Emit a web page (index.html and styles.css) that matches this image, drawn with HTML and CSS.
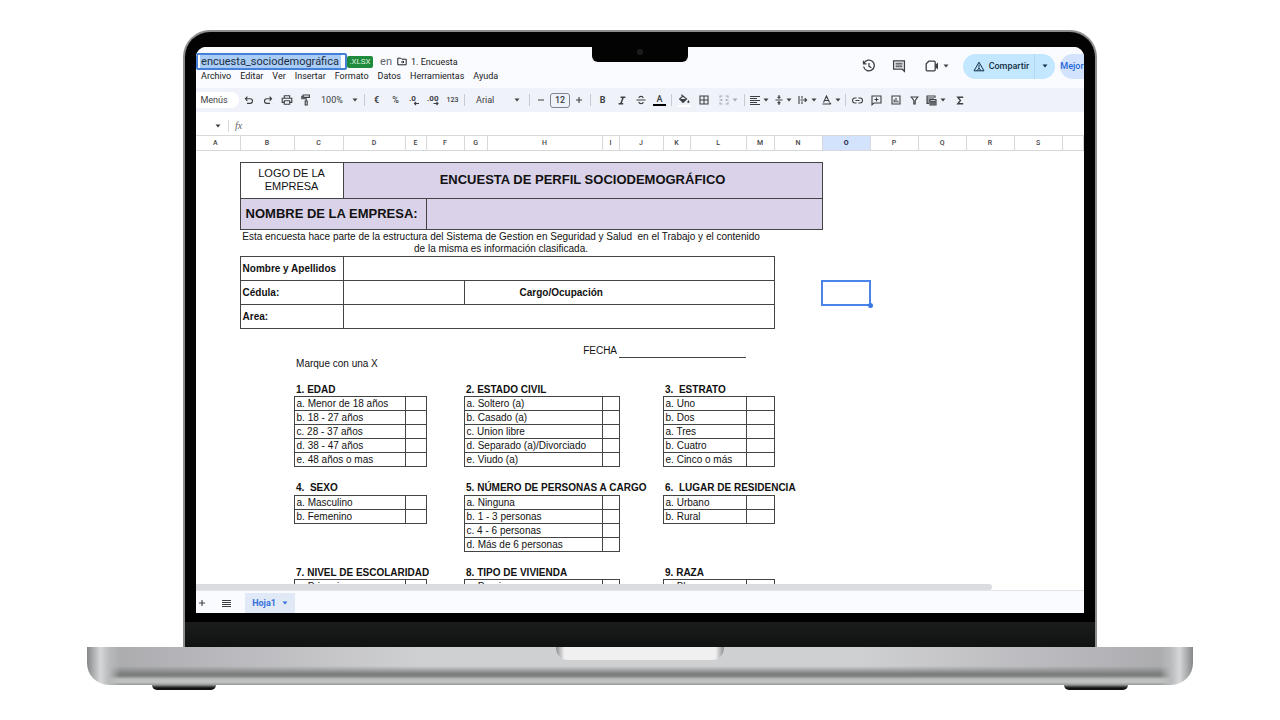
FILE: index.html
```html
<!DOCTYPE html>
<html lang="es">
<head>
<meta charset="utf-8">
<title>encuesta_sociodemográfica</title>
<link rel="stylesheet" href="styles.css">
</head>
<body>
<svg class="defs" aria-hidden="true">
  <symbol id="caret" viewBox="0 0 6 4"><path d="M.5.5h5L3 3.5z" fill="currentColor"/></symbol>
</svg>
<main class="laptop">
  <div class="lid">
    <div class="notch"><span class="camera"></span></div>
    <div class="screen">
      <header class="topbar">
        <div class="doc">
          <div class="title-row">
            <input class="doc-title" aria-label="Nombre del documento" value="encuesta_sociodemográfica">
            <span class="badge">.XLSX</span>
            <span class="in">en</span>
            <a class="folder" href="#">
              <svg width="10" height="9" viewBox="0 0 10 9" fill="none" stroke="currentColor"><path d="M.8 1.2h3l1 1h4.4v5.6H.8zM4 5h3M5.8 3.8 7 5 5.8 6.2"/></svg>
              1. Encuesta</a>
          </div>
          <nav class="menu">
            <button>Archivo</button><button>Editar</button><button>Ver</button><button>Insertar</button><button>Formato</button><button>Datos</button><button>Herramientas</button><button>Ayuda</button>
          </nav>
        </div>
        <div class="actions">
          <button class="act" aria-label="Historial"><svg width="14" height="14" viewBox="0 0 14 14" fill="none" stroke="currentColor" stroke-width="1.3"><path d="M2 4.2A5.4 5.4 0 1 1 1.6 7.5M1.5 1.8v3h3M7 4v3.3l2.4 1.5"/></svg></button>
          <button class="act" aria-label="Comentarios"><svg width="14" height="14" viewBox="0 0 14 14"><path d="M1.6 1.8h10.8v10.4l-2.2-2H1.6z" fill="none" stroke="currentColor" stroke-width="1.3"/><path d="M3.5 4.2h7M3.5 6h7M3.5 7.8h7" stroke="currentColor" stroke-width="1.1"/></svg></button>
          <button class="act meet" aria-label="Videollamada"><svg width="14" height="12" viewBox="0 0 14 12"><path d="M3.8 1.2h5.4q1 0 1 1v7.6q0 1-1 1H2.2q-1 0-1-1V3.8z" fill="none" stroke="currentColor" stroke-width="1.3"/><path d="M10 5l3-2.6v7.2L10 7z" fill="currentColor"/></svg><svg class="caret"><use href="#caret"/></svg></button>
          <div class="share">
            <button class="share-main"><svg width="12" height="11" viewBox="0 0 12 11" fill="none" stroke="currentColor"><path d="M6 1.2 11 9.8H1zM6 3.600v3.200M4.200 9.500 6 7l1.800 2.500"/></svg>Compartir</button>
            <button class="share-more" aria-label="Más opciones"><svg class="caret"><use href="#caret"/></svg></button>
          </div>
          <button class="upgrade">Mejor</button>
        </div>
      </header>

      <div class="toolbar">
        <button class="menus">Menús</button>
        <button aria-label="Deshacer"><svg width="10" height="10" viewBox="0 0 10 10" class="ln"><path d="M3.4 1.6 1.4 3.8l2 2.1M1.6 3.8h4.6a2.2 2.2 0 0 1 0 4.6H3"/></svg></button>
        <button aria-label="Rehacer"><svg width="10" height="10" viewBox="0 0 10 10" class="ln"><path d="M6.6 1.6l2 2.2-2 2.1M8.4 3.8H3.8a2.2 2.2 0 0 0 0 4.6H7"/></svg></button>
        <button aria-label="Imprimir"><svg width="12" height="10" viewBox="0 0 12 10" class="ln"><path d="M3.3 3V.8h5.4V3M3 7.4H1.2V3.2h9.6v4.2H9M3.3 5.8h5.4v3.4H3.3z"/></svg></button>
        <button aria-label="Copiar formato"><svg width="10" height="12" viewBox="0 0 10 12" class="ln"><path d="M2.2 1h6.2v2.4H2.2zM2.2 2.2H.8v2.6h4.4v2M4.2 7h2v4h-2z"/></svg></button>
        <button class="zoom">100%<svg class="caret"><use href="#caret"/></svg></button>
        <span class="sep"></span>
        <button class="bold">€</button>
        <button>%</button>
        <button aria-label="Reducir decimales"><svg width="13" height="12" viewBox="0 0 13 12"><text x="1" y="7" class="dec">.0</text><path class="ln" d="M11 9.5H6.5M8 8 6.5 9.5 8 11"/></svg></button>
        <button aria-label="Aumentar decimales"><svg width="13" height="12" viewBox="0 0 13 12"><text x="0" y="7" class="dec">.00</text><path class="ln" d="M6.5 9.5H11M9.5 8 11 9.5 9.5 11"/></svg></button>
        <button class="num">123</button>
        <span class="sep"></span>
        <button class="font">Arial<svg class="caret"><use href="#caret"/></svg></button>
        <span class="sep"></span>
        <button class="step" aria-label="Reducir"><svg width="8" height="8" viewBox="0 0 8 8" class="ln"><path d="M1 4h6"/></svg></button>
        <input class="size" aria-label="Tamaño de fuente" value="12">
        <button class="step" aria-label="Aumentar"><svg width="8" height="8" viewBox="0 0 8 8" class="ln"><path d="M1 4h6M4 1v6"/></svg></button>
        <span class="sep"></span>
        <button class="bold">B</button>
        <button aria-label="Cursiva"><svg width="8" height="9" viewBox="0 0 8 9" fill="none" stroke="currentColor" stroke-width="1.5"><path d="M2.6 1.2h4.8M.6 7.8h4.6M5.2 1.2 2.8 7.8"/></svg></button>
        <button aria-label="Tachado"><svg width="10" height="10" viewBox="0 0 10 10" class="ln"><path d="M.5 5h9M7.2 3.2C6.8.8 3 .8 3 3M2.8 6.8c.4 2.4 4.4 2.4 4.4.2"/></svg></button>
        <button class="color">A</button>
        <span class="sep"></span>
        <button class="wide" aria-label="Color de relleno"><svg width="13" height="13" viewBox="0 0 13 13"><path d="M3.4.8 8.6 5 5 8.4 1.6 5 5 2" class="ln"/><path d="M2 5h6.4L5 8.3zM10.4 6q2.2 3 0 3t0-3z" fill="currentColor"/><path d="M0 12h13" stroke="#fff" stroke-width="2"/></svg></button>
        <button class="wide" aria-label="Bordes"><svg width="10" height="10" viewBox="0 0 10 10" class="ln"><path d="M1 1h8v8H1zM5 1v8M1 5h8"/></svg></button>
        <button class="combo faint" aria-label="Combinar celdas"><svg width="10" height="10" viewBox="0 0 10 10" class="ln"><path d="M3.500 1H1v2M6.500 1H9v2M1 7v2h2.500M9 7v2H6.500M.5 5h3M9.500 5h-3M2.500 4v2M7.500 4v2"/></svg><svg class="caret"><use href="#caret"/></svg></button>
        <span class="sep"></span>
        <button class="combo" aria-label="Alineación horizontal"><svg width="10" height="9" viewBox="0 0 10 9" fill="none" stroke="currentColor"><path d="M0 .5h10M0 2.500h7M0 4.500h10M0 6.500h7M0 8.500h10"/></svg><svg class="caret"><use href="#caret"/></svg></button>
        <button class="combo" aria-label="Alineación vertical"><svg width="8" height="10" viewBox="0 0 8 10" class="ln"><path d="M.5 5h7M4 0v3M2.600 1.800 4 3.200l1.400-1.400M4 10V7M2.600 8.200 4 6.800l1.400 1.400"/></svg><svg class="caret"><use href="#caret"/></svg></button>
        <button class="combo" aria-label="Ajuste de texto"><svg width="10" height="10" viewBox="0 0 10 10" class="ln"><path d="M1 1v8M4 1v2.500M4 6.500V9M2.500 5h6M6.800 3.200 8.600 5 6.800 6.800"/></svg><svg class="caret"><use href="#caret"/></svg></button>
        <button class="combo" aria-label="Rotación de texto"><svg width="10" height="10" viewBox="0 0 10 10" class="ln"><path d="M1.500 7.500 4.500 1l3 6.500M2.500 5.500h4M.5 9h8.500M7.800 7.800 9 9"/></svg><svg class="caret"><use href="#caret"/></svg></button>
        <span class="sep"></span>
        <button aria-label="Insertar enlace"><svg width="11" height="7" viewBox="0 0 11 7" class="ln"><path d="M4.600 1H3a2.400 2.400 0 0 0 0 5h1.600M6.400 1H8a2.400 2.400 0 0 1 0 5H6.400M3.500 3.500h4"/></svg></button>
        <button aria-label="Insertar comentario"><svg width="11" height="11" viewBox="0 0 11 11" class="ln"><path d="M1 1h9v7H3L1 9.800zM5.500 2.500v4M3.500 4.500h4"/></svg></button>
        <button aria-label="Insertar gráfico"><svg width="10" height="10" viewBox="0 0 10 10" class="ln"><path d="M1 1h8v8H1zM3.200 4.500v3M5 3v4.500M6.800 5.800v1.700"/></svg></button>
        <button aria-label="Filtro"><svg width="9" height="9" viewBox="0 0 9 9" class="ln"><path d="M1.200 1h6.600L5.200 4.500V8H3.800V4.500z"/></svg></button>
        <button class="combo" aria-label="Vistas de tabla"><svg width="11" height="11" viewBox="0 0 11 11" class="ln"><path d="M3 8.500H1V1h8v2M1 3h7M1 5h3M1 7h3M4 4.500h6V10H4zM4 6.200h6M4 8h6M6 6v4M8 6v4"/></svg><svg class="caret"><use href="#caret"/></svg></button>
        <button class="combo" aria-label="Funciones"><svg width="8" height="9" viewBox="0 0 8 9" fill="none" stroke="currentColor" stroke-width="1.400"><path d="M6.500 2V1.200H1.800L4.400 4.500 1.800 7.800h4.700V7"/></svg></button>
      </div>

      <div class="formula">
        <button class="cell-menu" aria-label="Cuadro de nombres"><svg class="caret"><use href="#caret"/></svg></button>
        <span class="fx">fx</span>
      </div>

      <div class="sheet">
        <table>
          <colgroup><col class="w44"><col class="w54"><col class="w49"><col class="w62"><col class="w21"><col class="w38"><col class="w23"><col class="w115"><col class="w17"><col class="w44"><col class="w27"><col class="w56"><col class="w28"><col class="w48"><col class="w48"><col class="w48"><col class="w48"><col class="w48"><col class="w48"><col></colgroup>
          <thead>
            <tr><th class="first">A</th><th>B</th><th>C</th><th>D</th><th>E</th><th>F</th><th>G</th><th>H</th><th>I</th><th>J</th><th>K</th><th>L</th><th>M</th><th>N</th><th class="on">O</th><th>P</th><th>Q</th><th>R</th><th>S</th><th></th></tr>
          </thead>
          <tbody>
            <tr class="h12"><td colspan="20"></td></tr>
            <tr class="h36"><td></td><td colspan="2" class="b logo">LOGO DE LA EMPRESA</td><td colspan="11" class="b lilac heading">ENCUESTA DE PERFIL SOCIODEMOGRÁFICO</td><td colspan="6"></td></tr>
            <tr class="h31"><td></td><td colspan="4" class="b lilac company">NOMBRE DE LA EMPRESA:</td><td colspan="9" class="b lilac"></td><td colspan="6"></td></tr>
            <tr class="h27"><td></td><td colspan="12" class="note">Esta encuesta hace parte de la estructura del Sistema de Gestion en Seguridad y Salud&nbsp; en el Trabajo y el contenido<br>de la misma es información clasificada.</td><td colspan="7"></td></tr>
            <tr class="h24"><td></td><td colspan="2" class="b strong">Nombre y Apellidos</td><td colspan="10" class="b"></td><td colspan="7"></td></tr>
            <tr class="h24"><td></td><td colspan="2" class="b strong">Cédula:</td><td colspan="3" class="b"></td><td colspan="7" class="b strong job">Cargo/Ocupación</td><td></td><td class="cursor"><span class="selection"></span></td><td colspan="5"></td></tr>
            <tr class="h24"><td></td><td colspan="2" class="b strong">Area:</td><td colspan="10" class="b"></td><td colspan="7"></td></tr>
            <tr class="h16"><td colspan="20"></td></tr>
            <tr class="h13"><td colspan="7"></td><td colspan="2" class="right">FECHA</td><td colspan="3" class="line"></td><td colspan="8"></td></tr>
            <tr class="h13"><td colspan="2"></td><td colspan="18">Marque con una X</td></tr>
            <tr class="h13"><td colspan="20"></td></tr>
            <tr class="h13 strong"><td colspan="2"></td><td colspan="4">1. EDAD</td><td colspan="4">2. ESTADO CIVIL</td><td colspan="10">3.&nbsp; ESTRATO</td></tr>
            <tr class="h14"><td colspan="2"></td><td colspan="2" class="b">a. Menor de 18 años</td><td class="b"></td><td></td><td colspan="2" class="b">a. Soltero (a)</td><td class="b"></td><td></td><td colspan="2" class="b">a. Uno</td><td class="b"></td><td colspan="7"></td></tr>
            <tr class="h14"><td colspan="2"></td><td colspan="2" class="b">b. 18 - 27 años</td><td class="b"></td><td></td><td colspan="2" class="b">b. Casado (a)</td><td class="b"></td><td></td><td colspan="2" class="b">b. Dos</td><td class="b"></td><td colspan="7"></td></tr>
            <tr class="h14"><td colspan="2"></td><td colspan="2" class="b">c. 28 - 37 años</td><td class="b"></td><td></td><td colspan="2" class="b">c. Union libre</td><td class="b"></td><td></td><td colspan="2" class="b">a. Tres</td><td class="b"></td><td colspan="7"></td></tr>
            <tr class="h14"><td colspan="2"></td><td colspan="2" class="b">d. 38 - 47 años</td><td class="b"></td><td></td><td colspan="2" class="b">d. Separado (a)/Divorciado</td><td class="b"></td><td></td><td colspan="2" class="b">b. Cuatro</td><td class="b"></td><td colspan="7"></td></tr>
            <tr class="h14"><td colspan="2"></td><td colspan="2" class="b">e. 48 años o mas</td><td class="b"></td><td></td><td colspan="2" class="b">e. Viudo (a)</td><td class="b"></td><td></td><td colspan="2" class="b">e. Cinco o más</td><td class="b"></td><td colspan="7"></td></tr>
            <tr class="h15"><td colspan="20"></td></tr>
            <tr class="h14 strong"><td colspan="2"></td><td colspan="4">4.&nbsp; SEXO</td><td colspan="4">5. NÚMERO DE PERSONAS A CARGO</td><td colspan="10">6.&nbsp; LUGAR DE RESIDENCIA</td></tr>
            <tr class="h14"><td colspan="2"></td><td colspan="2" class="b">a. Masculino</td><td class="b"></td><td></td><td colspan="2" class="b">a. Ninguna</td><td class="b"></td><td></td><td colspan="2" class="b">a. Urbano</td><td class="b"></td><td colspan="7"></td></tr>
            <tr class="h14"><td colspan="2"></td><td colspan="2" class="b">b. Femenino</td><td class="b"></td><td></td><td colspan="2" class="b">b. 1 - 3 personas</td><td class="b"></td><td></td><td colspan="2" class="b">b. Rural</td><td class="b"></td><td colspan="7"></td></tr>
            <tr class="h14"><td colspan="6"></td><td colspan="2" class="b">c. 4 - 6 personas</td><td class="b"></td><td colspan="11"></td></tr>
            <tr class="h14"><td colspan="6"></td><td colspan="2" class="b">d. Más de 6 personas</td><td class="b"></td><td colspan="11"></td></tr>
            <tr class="h15"><td colspan="20"></td></tr>
            <tr class="h13 strong"><td colspan="2"></td><td colspan="4">7. NIVEL DE ESCOLARIDAD</td><td colspan="4">8. TIPO DE VIVIENDA</td><td colspan="10">9. RAZA</td></tr>
            <tr class="h14"><td colspan="2"></td><td colspan="2" class="b">a. Primaria</td><td class="b"></td><td></td><td colspan="2" class="b">a. Propia</td><td class="b"></td><td></td><td colspan="2" class="b">a. Blanca</td><td class="b"></td><td colspan="7"></td></tr>
          </tbody>
        </table>
      </div>
      <div class="scroll"><div class="thumb"></div></div>
      <footer class="tabs">
        <button class="tab-icon" aria-label="Añadir hoja"><svg width="8" height="8" viewBox="0 0 8 8" class="ln"><path d="M1 4h6M4 1v6"/></svg></button>
        <button class="tab-icon list" aria-label="Todas las hojas"><svg width="9" height="7" viewBox="0 0 9 7" fill="none" stroke="currentColor"><path d="M0 .5h9M0 2.500h9M0 4.500h9M0 6.500h9"/></svg></button>
        <button class="tab">Hoja1<svg class="caret"><use href="#caret"/></svg></button>
      </footer>
    </div>
    <div class="chin"></div>
  </div>
  <div class="base"><div class="lip"></div></div>
  <div class="feet"><span></span><span></span></div>
</main>
</body>
</html>
```
FILE: styles.css
```css
* { box-sizing: border-box; }
body { margin: 0; background: #fff; font-family: Roboto, "Liberation Sans", sans-serif; color: #3c4043; }
button, input { font: inherit; color: inherit; border: 0; background: none; padding: 0; margin: 0; }
button { display: flex; align-items: center; justify-content: center; white-space: nowrap; flex: none; }
a { color: inherit; text-decoration: none; }
svg { display: block; flex: none; }
.defs { position: absolute; width: 0; height: 0; }
.caret { width: 6px; height: 4px; }
.ln { fill: none; stroke: currentColor; stroke-width: 1.1; }

.laptop { width: 86.4%; min-width: 1104px; margin: 30px auto 0; }
.lid {
  position: relative; margin: 0 96px; padding: 15px 11px 0; overflow: hidden;
  background: #030303; border: 2px solid #8b8e8d; border-bottom: 0; border-radius: 27px 27px 0 0;
}
.notch {
  position: absolute; top: 14px; left: 50%; width: 96px; height: 16px; margin-left: -48px;
  background: #030303; border-radius: 0 0 6px 6px; display: flex; justify-content: center; align-items: flex-start;
}
.camera { width: 6px; height: 6px; margin-top: 3px; border-radius: 50%; background: #1b1c20; }
.screen { background: #fff; border-radius: 10px 10px 0 0; overflow: hidden; }
.chin { height: 34px; margin: 0 -11px; background: linear-gradient(#000 0 9px, #1b1d1c 9px, #101111); }

.topbar { display: flex; justify-content: space-between; height: 41px; background: #fafbfe; overflow: hidden; }
.doc { padding-top: 6px; }
.title-row { display: flex; align-items: center; height: 17px; }
.doc-title {
  width: 151px; height: 17px; padding: 0 3px; border: 2px solid #4580d8; border-radius: 2px;
  font-size: 11px; color: #1f2e3d; background: linear-gradient(#aacdf8, #aacdf8) 2px 0 / 141px 100% no-repeat;
}
.badge { width: 26px; height: 12px; border-radius: 2px; background: #1d8a3c; color: #d8f0dd; font-size: 8px; line-height: 12px; text-align: center; }
.in { margin: 0 5px 0 7px; font-size: 11px; color: #5f6368; }
.folder { display: flex; align-items: center; gap: 4px; font-size: 9px; color: #202124; }
.menu { display: flex; gap: 9px; padding-left: 5px; font-size: 9px; line-height: 12px; color: #202124; }
.actions { display: flex; align-items: center; height: 38px; }
.act { width: 30px; height: 20px; }
.act.meet { width: 36px; gap: 4px; margin: 0 8px 0 5px; }
.share { display: flex; height: 25px; border-radius: 13px; overflow: hidden; background: #c2e7ff; color: #123047; font-size: 9px; font-weight: 500; }
.share-main { width: 72px; gap: 4px; padding-left: 5px; border-right: 1px solid #b0d9f4; }
.share-more { width: 20px; }
.upgrade { width: 24px; height: 25px; margin-left: 5px; border-radius: 13px 0 0 13px; background: #d3e3fd; color: #2468d8; font-size: 9px; font-weight: 500; }

.toolbar { display: flex; align-items: center; height: 24px; background: #eff2f9; font-size: 9px; font-weight: 500; overflow: hidden; }
.toolbar button { width: 19px; height: 20px; }
.toolbar .menus { width: 43px; height: 16px; padding-right: 7px; border-radius: 0 8px 8px 0; background: #fff; font-weight: 400; }
.toolbar .zoom { width: 47px; padding: 0 4px 0 6px; justify-content: space-between; font-size: 9px; font-weight: 400; }
.toolbar .font { width: 60px; padding: 0 7px 0 9px; justify-content: space-between; font-weight: 400; }
.toolbar .step { width: 18px; }
.toolbar .wide { width: 20px; }
.toolbar .combo { width: 24px; gap: 3px; }
.toolbar .bold { font-weight: 700; }
.toolbar .num { font-size: 7px; }
.toolbar .faint { width: 28px; color: #a9adb3; }
.toolbar .color { width: 13px; height: 12px; margin: 0 3px; border-bottom: 2px solid #000; }
.dec { font-size: 8px; font-weight: 700; fill: currentColor; }
.sep { flex: none; width: 1px; height: 12px; margin: 0 2px; background: #c7cad0; }
.size { width: 20px; height: 15px; border: 1px solid #80858b; border-radius: 3px; text-align: center; font-size: 9px; }

.formula { display: flex; align-items: center; height: 23px; padding-top: 4px; }
.cell-menu { width: 33px; height: 12px; padding-left: 11px; border-right: 1px solid #d5d7da; }
.fx { padding-left: 6px; font: italic 10px "Liberation Serif", serif; color: #5f6368; }

.sheet { height: 449px; overflow: hidden; font-family: "Liberation Sans", Arial, sans-serif; font-size: 10px; color: #111; }
table { width: 100%; table-layout: fixed; border-collapse: collapse; }
th { height: 15px; padding: 0; border: 1px solid #d6d8da; border-width: 1px 1px 1px 0; font: 500 7px Roboto, sans-serif; color: #444; }
.first { padding-right: 5px; }
.on { background: #d3e3fd; font-weight: 700; color: #10213d; }
td { padding: 0 2px; line-height: 12px; white-space: nowrap; vertical-align: middle; }
.w17 { width: 17px; } .w21 { width: 21px; } .w23 { width: 23px; } .w27 { width: 27px; } .w28 { width: 28px; }
.w38 { width: 38px; } .w44 { width: 44px; } .w48 { width: 48px; } .w49 { width: 49px; } .w54 { width: 54px; }
.w56 { width: 56px; } .w62 { width: 62px; } .w115 { width: 115px; }
.h12 { height: 12px; } .h13 { height: 13px; } .h14 { height: 14px; } .h15 { height: 15px; } .h16 { height: 16px; }
.h24 { height: 24px; } .h27 { height: 27px; } .h31 { height: 31px; } .h36 { height: 36px; }
.b { border: 1px solid #444; }
.lilac { background: #d9d2e9; }
.strong { font-weight: 700; }
.logo { padding: 0 12px 2px; white-space: normal; text-align: center; font-size: 11px; line-height: 13px; }
.heading { padding-bottom: 2px; text-align: center; font-size: 13px; font-weight: 700; }
.company { padding-left: 5px; font-size: 13px; font-weight: 700; }
.note { padding-right: 14px; text-align: center; }
.job { padding-left: 55px; }
.right { text-align: right; }
.line { border-bottom: 1px solid #444; }
.cursor { position: relative; }
.selection { position: absolute; inset: -1px; border: 2px solid #4a83ea; }
.selection::after { content: ""; position: absolute; right: -4px; bottom: -4px; width: 5px; height: 5px; border-radius: 50%; background: #3b78e7; }

.scroll { height: 7px; background: #fff; border-bottom: 1px solid #e3e5e8; }
.thumb { width: 89.6%; height: 6px; border-radius: 0 3px 3px 0; background: #dadce0; }
.tabs { display: flex; align-items: center; height: 22px; padding-top: 2px; background: #f9fbfe; font-size: 9px; }
.tab-icon { width: 12px; height: 20px; }
.list { width: 37px; }
.tab { gap: 6px; width: 50px; height: 20px; background: #e1e9f7; color: #3470dc; font-weight: 700; }

.base {
  height: 38px; border-radius: 0 0 22px 22px; display: flex; justify-content: center;
  background:
    linear-gradient(90deg, #868888, #d6d7d9 1.2%, #b9babb 2%, transparent 3% 97%, #b9babb 98%, #d6d7d9 98.8%, #868888),
    linear-gradient(transparent 50%, #7c7f7e 70% 76%, #b9bbbb 84%, #c3c5c5 92%, #969898),
    linear-gradient(90deg, #a8a9aa, #b4b3b8 8%, #cfd0d2 30% 70%, #b4b3b8 92%, #a8a9aa);
}
.lip { width: 168px; height: 13px; border-radius: 0 0 12px 12px; background: linear-gradient(90deg, #8e8f92, #f0f0f1 5% 95%, #8e8f92); }
.feet { display: flex; justify-content: space-between; padding: 0 65px; }
.feet span { width: 64px; height: 5px; border-radius: 0 0 8px 8px; background: linear-gradient(#8b8d8d, #111 60%); }
```
